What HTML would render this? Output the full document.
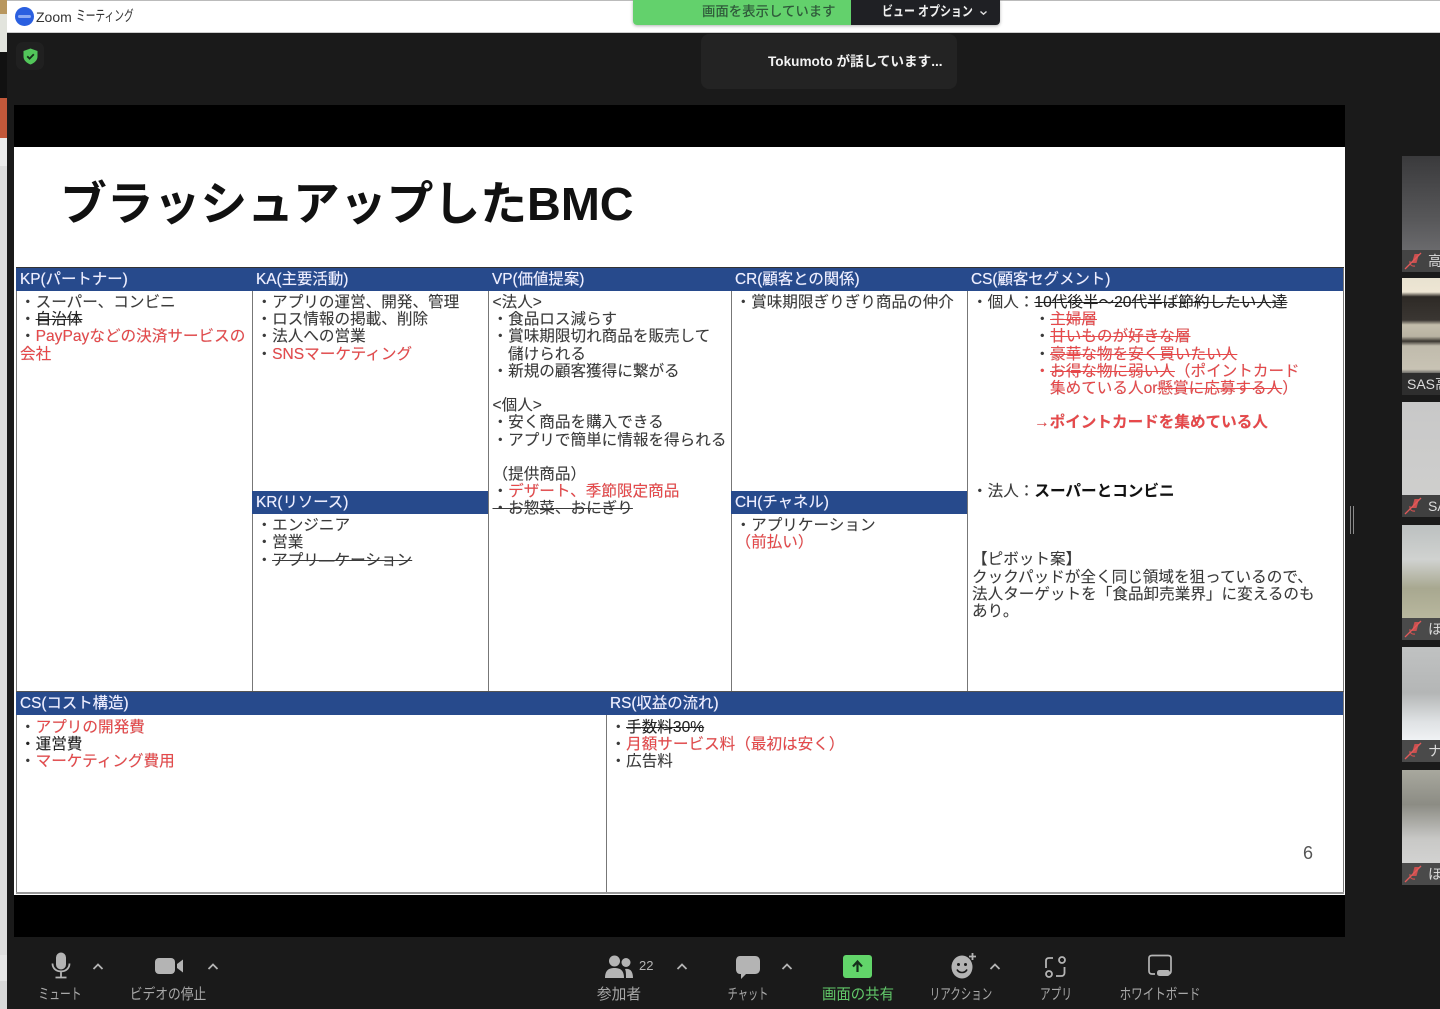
<!DOCTYPE html>
<html lang="ja"><head><meta charset="utf-8"><title>Zoom ミーティング</title>
<style>
html,body{margin:0;padding:0;background:#1a1a1a}
#p{position:relative;width:1440px;height:1009px;overflow:hidden;background:#1a1a1a;font-family:"Liberation Sans","Noto Sans CJK JP",sans-serif}
#p div{position:absolute}
.l{font-size:15.6px;line-height:18px;height:18px;margin-top:2px;white-space:nowrap;color:#3a3a3a;text-shadow:0 0 .4px rgba(50,50,50,.5)}
.r{color:#e8484a}
.k{color:#222}
.h{background:#274a8c;height:23px;color:#eef;font-size:15.4px;line-height:23px;white-space:nowrap;padding-left:4px;box-sizing:border-box;text-shadow:0 0 .5px #eef}
.v{background:#777;width:1.4px}
.t{font-size:15px;line-height:18px;color:#a8a8a8;text-align:center;white-space:nowrap;top:985px;width:120px}
.tile{left:1402px;width:38px;overflow:hidden}
.bar{left:0;right:0;bottom:0;height:22px;background:#3d3d3d}
.nm{left:26px;bottom:2px;color:#ddd;font-size:14px;line-height:18px;white-space:nowrap}
.mu{position:absolute;left:2px;bottom:2px}
s{text-decoration-thickness:1.2px}
#text{filter:blur(.35px)}
</style></head><body><div id="p">

<!-- desktop sliver -->
<div style="left:0;top:0;width:7px;height:1009px;background:#dedede"></div>
<div style="left:0;top:0;width:7px;height:14px;background:#b8975f"></div>
<div style="left:0;top:14px;width:7px;height:38px;background:#e2e4dd"></div>
<div style="left:0;top:52px;width:7px;height:46px;background:#111"></div>
<div style="left:0;top:98px;width:7px;height:40px;background:#c2583a"></div>
<div style="left:0;top:138px;width:7px;height:28px;background:#ececec"></div>
<div style="left:0;top:955px;width:7px;height:26px;background:#e6e6e6"></div>
<div style="left:0;top:981px;width:7px;height:28px;background:#d8d8d8"></div>

<!-- title bar -->
<div style="left:7px;top:0;width:1433px;height:33px;background:#fff;border-top:1px solid #bbb;border-bottom:1px solid #ccc;box-sizing:border-box"></div>
<div style="left:15px;top:7px;width:19px;height:19px;border-radius:50%;background:#2a5fe0"></div>
<div style="left:18px;top:15px;width:13px;height:3px;background:#cfdcff;opacity:.6;border-radius:2px"></div>
<div style="left:36px;top:8px;font-size:14px;line-height:18px;color:#333;white-space:nowrap">Zoom</div>
<div style="left:76px;top:8px;font-size:14.5px;line-height:18px;color:#333;white-space:nowrap;transform:scaleX(.67);transform-origin:left">ミーティング</div>

<!-- share banner -->
<div style="left:633px;top:0;width:367px;height:25px;border-radius:0 0 4px 4px;box-shadow:0 1px 3px rgba(0,0,0,.3)"></div>
<div style="left:633px;top:0;width:218px;height:25px;background:#63d16c;border-radius:0 0 0 4px"></div>
<div style="left:851px;top:0;width:149px;height:25px;background:#1f2024;border-radius:0 0 4px 0"></div>
<div style="left:702px;top:3px;font-size:13.4px;line-height:18px;color:#2f5a3a;white-space:nowrap;font-weight:500">画面を表示しています</div>
<div style="left:882px;top:3px;font-size:13.4px;line-height:18px;color:#f0f0f0;white-space:nowrap;font-weight:700;transform:scaleX(.82);transform-origin:left">ビュー オプション</div>
<svg style="position:absolute;left:979px;top:10px" width="9" height="6" viewBox="0 0 9 6"><path d="M1.5 1.5 4.5 4.2 7.5 1.5" stroke="#ddd" stroke-width="1.4" fill="none"/></svg>

<!-- speaker -->
<div style="left:701px;top:34px;width:256px;height:55px;background:#232323;border-radius:8px"></div>
<div style="left:768px;top:53px;font-size:13.6px;line-height:18px;color:#f2f2f2;white-space:nowrap;font-weight:700">Tokumoto が話しています...</div>

<!-- shield -->
<div style="left:16px;top:42px;width:28px;height:28px;background:#202020;border-radius:7px"></div>
<svg style="position:absolute;left:23px;top:48px" width="15" height="17" viewBox="0 0 15 17"><path d="M7.5 0.5 14.5 3V8.5C14.5 12.5 11 15.3 7.5 16.5 4 15.3 0.5 12.5 0.5 8.5V3Z" fill="#52c65a"/><path d="M4.2 8.3 6.6 10.6 10.8 6.2" stroke="#16301a" stroke-width="1.8" fill="none"/></svg>

<!-- slide -->
<div style="left:14px;top:105px;width:1331px;height:832px;background:#000"></div>
<div style="left:14px;top:147px;width:1331px;height:748px;background:#fff"></div>

<div id="text" style="left:0;top:0;width:1440px;height:1009px">
<div style="left:60px;top:169px;font-size:46.8px;line-height:70px;font-weight:700;color:#111;white-space:nowrap">ブラッシュアップしたBMC</div>

<!-- grid -->
<div class="v" style="left:15.5px;top:268px;height:626px"></div>
<div class="v" style="left:252px;top:268px;height:424px"></div>
<div class="v" style="left:488px;top:268px;height:424px"></div>
<div class="v" style="left:731px;top:268px;height:424px"></div>
<div class="v" style="left:967px;top:268px;height:424px"></div>
<div class="v" style="left:606px;top:692px;height:202px"></div>
<div class="v" style="left:1343px;top:268px;height:626px"></div>
<div style="left:16px;top:892px;width:1328px;height:2px;background:#999"></div>
<div style="left:16px;top:267px;width:1328px;height:1px;background:#333"></div>
<div style="left:16px;top:691px;width:1328px;height:1px;background:#555"></div>

<div class="h" style="left:16px;top:268px;width:236px">KP(パートナー)</div>
<div class="h" style="left:252px;top:268px;width:236px">KA(主要活動)</div>
<div class="h" style="left:488px;top:268px;width:243px">VP(価値提案)</div>
<div class="h" style="left:731px;top:268px;width:236px">CR(顧客との関係)</div>
<div class="h" style="left:967px;top:268px;width:376px">CS(顧客セグメント)</div>
<div class="h" style="left:252px;top:491px;width:236px">KR(リソース)</div>
<div class="h" style="left:731px;top:491px;width:236px">CH(チャネル)</div>
<div class="h" style="left:16px;top:692px;width:590px">CS(コスト構造)</div>
<div class="h" style="left:606px;top:692px;width:737px">RS(収益の流れ)</div>

<!-- KP -->
<div class="l" style="left:20px;top:292px">・スーパー、コンビニ</div>
<div class="l" style="left:20px;top:309px">・<s class="k">自治体</s></div>
<div class="l" style="left:20px;top:326px">・<span class="r">PayPayなどの決済サービスの</span></div>
<div class="l r" style="left:20px;top:344px">会社</div>
<!-- KA -->
<div class="l" style="left:256.500px;top:292px">・アプリの運営、開発、管理</div>
<div class="l" style="left:256.500px;top:309px">・ロス情報の掲載、削除</div>
<div class="l" style="left:256.500px;top:326px">・法人への営業</div>
<div class="l" style="left:256.500px;top:344px">・<span class="r">SNSマーケティング</span></div>
<!-- KR -->
<div class="l" style="left:256.500px;top:515px">・エンジニア</div>
<div class="l" style="left:256.500px;top:532px">・営業</div>
<div class="l" style="left:256.500px;top:550px">・<s>アプリ―ケーション</s></div>
<!-- VP -->
<div class="l" style="left:492.5px;top:292px">&lt;法人&gt;</div>
<div class="l" style="left:492.5px;top:309px">・食品ロス減らす</div>
<div class="l" style="left:492.5px;top:326px">・賞味期限切れ商品を販売して</div>
<div class="l" style="left:508px;top:344px">儲けられる</div>
<div class="l" style="left:492.5px;top:361px">・新規の顧客獲得に繋がる</div>
<div class="l" style="left:492.5px;top:395px">&lt;個人&gt;</div>
<div class="l" style="left:492.5px;top:412px">・安く商品を購入できる</div>
<div class="l" style="left:492.5px;top:430px">・アプリで簡単に情報を得られる</div>
<div class="l" style="left:492.5px;top:464px">（提供商品）</div>
<div class="l" style="left:492.5px;top:481px">・<span class="r">デザート、季節限定商品</span></div>
<div class="l" style="left:492.5px;top:498px"><s>・お惣菜、おにぎり</s></div>
<!-- CR / CH -->
<div class="l" style="left:735.500px;top:292px">・賞味期限ぎりぎり商品の仲介</div>
<div class="l" style="left:735.500px;top:515px">・アプリケーション</div>
<div class="l r" style="left:735.500px;top:532px">（前払い）</div>
<!-- CS -->
<div class="l" style="left:972px;top:292px">・個人：<s class="k">10代後半～20代半ば節約したい人達</s></div>
<div class="l" style="left:1034.5px;top:309px">・<s class="r">主婦層</s></div>
<div class="l" style="left:1034.5px;top:326px">・<s class="r">甘いものが好きな層</s></div>
<div class="l" style="left:1034.5px;top:344px">・<s class="r">豪華な物を安く買いたい人</s></div>
<div class="l r" style="left:1034.5px;top:361px">・<s>お得な物に弱い人</s>（ポイントカード</div>
<div class="l r" style="left:1050px;top:378px">集めている人or<s>懸賞に応募する人</s>）</div>
<div class="l r" style="left:1034px;top:412px;font-weight:700;font-size:15.6px">→ポイントカードを集めている人</div>
<div class="l" style="left:972px;top:481px">・法人：<b style="color:#111">スーパーとコンビニ</b></div>
<div class="l" style="left:972px;top:549px">【ピボット案】</div>
<div class="l" style="left:972px;top:567px">クックパッドが全く同じ領域を狙っているので、</div>
<div class="l" style="left:972px;top:584px">法人ターゲットを「食品卸売業界」に変えるのも</div>
<div class="l" style="left:972px;top:601px">あり。</div>
<!-- cost -->
<div class="l" style="left:20px;top:717px">・<span class="r">アプリの開発費</span></div>
<div class="l k" style="left:20px;top:734px">・運営費</div>
<div class="l" style="left:20px;top:751px">・<span class="r">マーケティング費用</span></div>
<!-- revenue -->
<div class="l" style="left:610.500px;top:717px">・<s class="k">手数料30%</s></div>
<div class="l" style="left:610.500px;top:734px">・<span class="r">月額サービス料（最初は安く）</span></div>
<div class="l" style="left:610.500px;top:751px">・広告料</div>
<div style="left:1303px;top:843px;font-size:18px;line-height:20px;color:#555">6</div>
</div>

<!-- divider handle -->
<div style="left:1349.5px;top:506px;width:1.5px;height:28px;background:#8a8a8a"></div>
<div style="left:1352.5px;top:506px;width:1.5px;height:28px;background:#8a8a8a"></div>

<!-- thumbnails -->
<div class="tile" style="top:156px;height:116px;background:linear-gradient(#3a3a3c,#58585a 55%,#77777a)"><div class="bar" style="background:#444"></div><div class="nm">高</div><svg class="mu" width="19" height="18" viewBox="0 0 19 18"><path d="M10.500 2 15 2 12.500 11 8 11Z" fill="#c9504f"/><path d="M6 9C5.500 13 8 14.500 11 14" stroke="#c9504f" stroke-width="1.200" fill="none"/><path d="M1 17 17 1" stroke="#e25a5a" stroke-width="1.300"/></svg></div>
<div class="tile" style="top:278px;height:117px;background:linear-gradient(#e8e2d0 0,#eee6d4 12%,#2e2a26 16%,#3a3632 36%,#c4beac 40%,#b8b2a2 50%,#3a3630 54%,#c0bbac 58%,#c8c3b4 78%,#555 82%)"><div class="bar" style="background:#2e2e2e"></div><div style="left:5px;bottom:2px;color:#ddd;font-size:14px;line-height:18px;white-space:nowrap">SAS高</div></div>
<div class="tile" style="top:402px;height:115px;background:linear-gradient(#c8c8c8,#d0d0ce)"><div class="bar" style="background:#404040"></div><div class="nm">SA</div><svg class="mu" width="19" height="18" viewBox="0 0 19 18"><path d="M10.500 2 15 2 12.500 11 8 11Z" fill="#c9504f"/><path d="M6 9C5.500 13 8 14.500 11 14" stroke="#c9504f" stroke-width="1.200" fill="none"/><path d="M1 17 17 1" stroke="#e25a5a" stroke-width="1.300"/></svg></div>
<div class="tile" style="top:525px;height:115px;background:linear-gradient(#bcc0c0,#d0d2d0 30%,#a8a890 55%,#c4c2a8)"><div class="bar" style="background:#4a4a4a"></div><div class="nm">ほ</div><svg class="mu" width="19" height="18" viewBox="0 0 19 18"><path d="M10.500 2 15 2 12.500 11 8 11Z" fill="#c9504f"/><path d="M6 9C5.500 13 8 14.500 11 14" stroke="#c9504f" stroke-width="1.200" fill="none"/><path d="M1 17 17 1" stroke="#e25a5a" stroke-width="1.300"/></svg></div>
<div class="tile" style="top:647px;height:115px;background:linear-gradient(#c0c2c2,#b4b6b6 40%,#dfe2e4 65%,#f4f6f8 85%)"><div class="bar" style="background:#4a4a4a"></div><div class="nm">ナ</div><svg class="mu" width="19" height="18" viewBox="0 0 19 18"><path d="M10.500 2 15 2 12.500 11 8 11Z" fill="#c9504f"/><path d="M6 9C5.500 13 8 14.500 11 14" stroke="#c9504f" stroke-width="1.200" fill="none"/><path d="M1 17 17 1" stroke="#e25a5a" stroke-width="1.300"/></svg></div>
<div class="tile" style="top:770px;height:115px;background:linear-gradient(#a8a89e,#8c8c84 30%,#c8c8c6 60%,#dcdcdc)"><div class="bar" style="background:#4a4a4a"></div><div class="nm">ほ</div><svg class="mu" width="19" height="18" viewBox="0 0 19 18"><path d="M10.500 2 15 2 12.500 11 8 11Z" fill="#c9504f"/><path d="M6 9C5.500 13 8 14.500 11 14" stroke="#c9504f" stroke-width="1.200" fill="none"/><path d="M1 17 17 1" stroke="#e25a5a" stroke-width="1.300"/></svg></div>

<!-- toolbar icons -->
<svg style="position:absolute;left:50px;top:952px" width="22" height="28" viewBox="0 0 22 28"><rect x="6" y="0.5" width="10" height="17" rx="5" fill="#b4b4b4"/><path d="M2.5 11.5C2.5 22 19.5 22 19.5 11.5M11 19.5V25M5.5 25.5H16.5" stroke="#b4b4b4" stroke-width="1.8" fill="none"/></svg>
<svg style="position:absolute;left:154px;top:957px" width="30" height="18" viewBox="0 0 30 18"><rect x="1" y="1" width="20" height="16" rx="4" fill="#b4b4b4"/><path d="M23 7 29 2.5V15.5L23 11Z" fill="#b4b4b4"/></svg>
<svg style="position:absolute;left:604px;top:955px" width="30" height="24" viewBox="0 0 30 24"><circle cx="10.5" cy="6" r="5.5" fill="#b4b4b4"/><circle cx="22" cy="7.5" r="4.5" fill="#b4b4b4"/><path d="M1 23C1 15 5 13 10.500 13S20 15 20 23Z" fill="#b4b4b4"/><path d="M21 14C26 13 29 16 29 23H22C22 19 22 16 21 14Z" fill="#b4b4b4"/></svg>
<svg style="position:absolute;left:735px;top:955px" width="26" height="26" viewBox="0 0 26 26"><path d="M5 1H20C23 1 25 3 25 6V14C25 17 23 19 20 19H11L6 24V19H5C2.500 19 1 17 1 14V6C1 3 2.500 1 5 1Z" fill="#b4b4b4"/></svg>
<svg style="position:absolute;left:843px;top:955px" width="29" height="23" viewBox="0 0 29 23"><rect width="29" height="23" rx="3" fill="#62d56a"/><path d="M14.500 17V7M10 11.500 14.500 6.500 19 11.500" stroke="#14301a" stroke-width="2.200" fill="none"/></svg>
<svg style="position:absolute;left:950px;top:952px" width="28" height="28" viewBox="0 0 28 28"><ellipse cx="12" cy="15" rx="10.500" ry="11.500" fill="#b4b4b4"/><circle cx="8.500" cy="12.500" r="1.500" fill="#1a1a1a"/><circle cx="15.500" cy="12.500" r="1.500" fill="#1a1a1a"/><path d="M7 17.500C9 21.500 15 21.500 17 17.500" stroke="#1a1a1a" stroke-width="1.600" fill="none"/><path d="M22.500 1V8M19 4.500H26" stroke="#b4b4b4" stroke-width="1.800"/></svg>
<svg style="position:absolute;left:1044px;top:955px" width="24" height="24" viewBox="0 0 24 24"><path d="M2 13V6C2 4 3 3 5 3H9M12 21H17C19 21 20.500 20 20.500 18V12" stroke="#b4b4b4" stroke-width="1.800" fill="none"/><circle cx="18" cy="5" r="3" stroke="#b4b4b4" stroke-width="1.800" fill="none"/><circle cx="5" cy="19" r="3" stroke="#b4b4b4" stroke-width="1.800" fill="none"/></svg>
<svg style="position:absolute;left:1147px;top:954px" width="26" height="24" viewBox="0 0 26 24"><path d="M8 20H5C3 20 2 19 2 17V4C2 2.500 3 1.500 5 1.500H21C23 1.500 24 2.500 24 4V17C24 19 23 20 21 20" stroke="#b4b4b4" stroke-width="1.700" fill="none"/><rect x="10" y="16" width="13" height="6" rx="2.500" fill="#b4b4b4"/></svg>
<svg style="position:absolute;left:92px;top:962px" width="12" height="9" viewBox="0 0 12 9"><path d="M1.500 7 6 2.500 10.500 7" stroke="#b4b4b4" stroke-width="1.800" fill="none"/></svg>
<svg style="position:absolute;left:207px;top:962px" width="12" height="9" viewBox="0 0 12 9"><path d="M1.500 7 6 2.500 10.500 7" stroke="#b4b4b4" stroke-width="1.800" fill="none"/></svg>
<svg style="position:absolute;left:676px;top:962px" width="12" height="9" viewBox="0 0 12 9"><path d="M1.500 7 6 2.500 10.500 7" stroke="#b4b4b4" stroke-width="1.800" fill="none"/></svg>
<svg style="position:absolute;left:781px;top:962px" width="12" height="9" viewBox="0 0 12 9"><path d="M1.500 7 6 2.500 10.500 7" stroke="#b4b4b4" stroke-width="1.800" fill="none"/></svg>
<svg style="position:absolute;left:989px;top:962px" width="12" height="9" viewBox="0 0 12 9"><path d="M1.500 7 6 2.500 10.500 7" stroke="#b4b4b4" stroke-width="1.800" fill="none"/></svg>
<div style="left:639px;top:957px;font-size:13px;line-height:18px;color:#b4b4b4">22</div>

<!-- toolbar labels -->
<div class="t" style="left:0px;top:986px;transform:scaleX(.72)">ミュート</div>
<div class="t" style="left:108px;top:986px;transform:scaleX(.85)">ビデオの停止</div>
<div class="t" style="left:559px;top:986px;transform:scaleX(.98)">参加者</div>
<div class="t" style="left:688px;top:986px;transform:scaleX(.68)">チャット</div>
<div class="t" style="left:798px;top:986px;color:#62c96a;transform:scaleX(.96)">画面の共有</div>
<div class="t" style="left:901px;top:986px;transform:scaleX(.7)">リアクション</div>
<div class="t" style="left:996px;top:986px;transform:scaleX(.71)">アプリ</div>
<div class="t" style="left:1100px;top:986px;transform:scaleX(.77)">ホワイトボード</div>

</div></body></html>
